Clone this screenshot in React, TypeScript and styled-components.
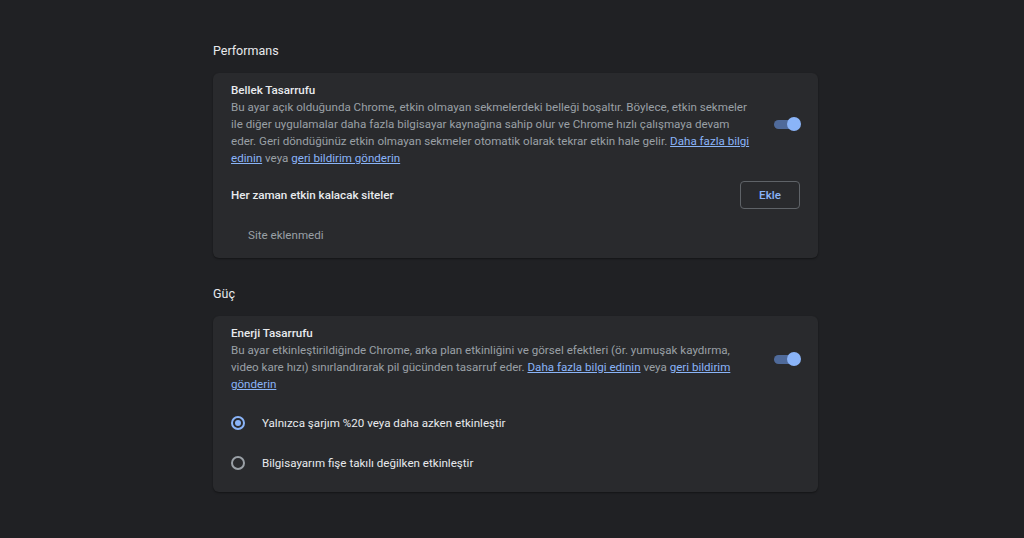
import React from 'react'
import styled, { createGlobalStyle } from 'styled-components'

const Global = createGlobalStyle`
  body { margin: 0; background: #202124; font-family: Roboto, "Liberation Sans", sans-serif; }
`

const Page = styled.div`
  width: 605px;
  margin-left: 213px;
  padding-top: 43px;
  display: flex;
  flex-direction: column;
`

const SectionTitle = styled.div`
  color: #e8eaed;
  font-size: 12.5px;
  height: 16px;
  margin-bottom: 14px;
`

const Card = styled.div`
  background: #292a2d;
  border-radius: 6px;
  padding: 9px 18px 0;
  margin-bottom: 28px;
  box-shadow: 0 1px 2px rgba(0,0,0,0.4);
`

const Row = styled.div`
  display: flex;
  align-items: center;
  gap: 22px;
`

const TextCol = styled.div`
  flex: 1;
  font-size: 11.6px;
  line-height: 17px;
`

const Label = styled.div<{ bold?: boolean }>`
  color: #e8eaed;
  font-size: 11.6px;
  font-weight: ${p => (p.bold ? 500 : 400)};
`

const Desc = styled.div`
  color: #9aa0a6;
`

const Link = styled.a`
  color: #8ab4f8;
  text-decoration: underline;
`

const Toggle = styled.div`
  position: relative;
  width: 26px;
  height: 9px;
  border-radius: 5px;
  background: #4f6a9a;
  flex-shrink: 0;
  &::after {
    content: '';
    position: absolute;
    right: -1px;
    top: -3px;
    width: 14px;
    height: 14px;
    border-radius: 50%;
    background: #8ab4f8;
  }
`

const SitesRow = styled.div`
  display: flex;
  align-items: center;
  justify-content: space-between;
  height: 28px;
  margin-top: 14px;
`

const Button = styled.button`
  width: 60px;
  height: 28px;
  border: 1px solid #5f6368;
  border-radius: 4px;
  background: transparent;
  color: #8ab4f8;
  font-family: inherit;
  font-weight: 500;
  font-size: 11.6px;
`

const Empty = styled.div`
  color: #9aa0a6;
  font-size: 11.6px;
  padding: 19px 0 0 17px;
  height: 30px;
`

const RadioRow = styled.div`
  display: flex;
  align-items: center;
  height: 40px;
  gap: 17px;
  color: #e8eaed;
  font-size: 11.6px;
`

const Radio = styled.span<{ checked?: boolean }>`
  width: 10px;
  height: 10px;
  border-radius: 50%;
  border: 2px solid ${p => (p.checked ? '#8ab4f8' : '#9aa0a6')};
  display: flex;
  align-items: center;
  justify-content: center;
  margin-left: 0;
  &::after {
    content: '';
    width: 6px;
    height: 6px;
    border-radius: 50%;
    background: ${p => (p.checked ? '#8ab4f8' : 'transparent')};
  }
`

const Spacer = styled.div<{ h: number }>`
  height: ${p => p.h}px;
`

export default function App() {
  return (
    <>
      <Global />
      <Page>
        <SectionTitle>Performans</SectionTitle>
        <Card>
          <Row>
            <TextCol>
              <Label bold>Bellek Tasarrufu</Label>
              <Desc>
                Bu ayar açık olduğunda Chrome, etkin olmayan sekmelerdeki belleği boşaltır. Böylece, etkin sekmeler ile diğer uygulamalar daha fazla bilgisayar kaynağına sahip olur ve Chrome hızlı çalışmaya devam eder. Geri döndüğünüz etkin olmayan sekmeler otomatik olarak tekrar etkin hale gelir. <Link>Daha fazla bilgi edinin</Link> veya <Link>geri bildirim gönderin</Link>
              </Desc>
            </TextCol>
            <Toggle />
          </Row>
          <SitesRow>
            <Label bold>Her zaman etkin kalacak siteler</Label>
            <Button>Ekle</Button>
          </SitesRow>
          <Empty>Site eklenmedi</Empty>
        </Card>
        <SectionTitle>Güç</SectionTitle>
        <Card>
          <Row>
            <TextCol>
              <Label bold>Enerji Tasarrufu</Label>
              <Desc>
                Bu ayar etkinleştirildiğinde Chrome, arka plan etkinliğini ve görsel efektleri (ör. yumuşak kaydırma, video kare hızı) sınırlandırarak pil gücünden tasarruf eder. <Link>Daha fazla bilgi edinin</Link> veya <Link>geri bildirim gönderin</Link>
              </Desc>
            </TextCol>
            <Toggle />
          </Row>
          <Spacer h={10} />
          <RadioRow>
            <Radio checked />
            <span>Yalnızca şarjım %20 veya daha azken etkinleştir</span>
          </RadioRow>
          <RadioRow>
            <Radio />
            <span>Bilgisayarım fişe takılı değilken etkinleştir</span>
          </RadioRow>
          <Spacer h={9} />
        </Card>
      </Page>
    </>
  )
}
